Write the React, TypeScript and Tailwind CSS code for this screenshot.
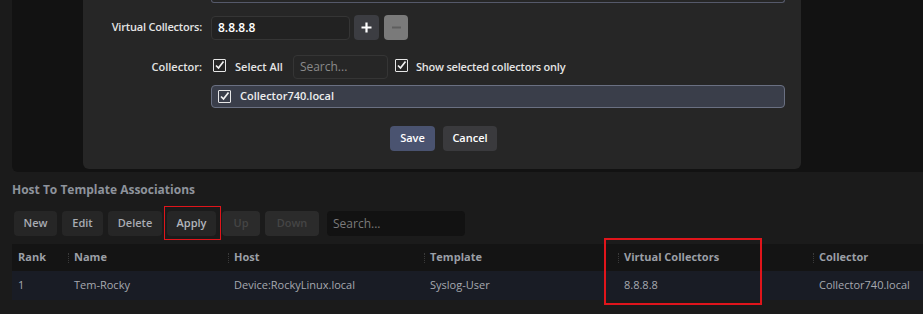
import React from "react";

const Check = () => (
  <span className="inline-flex w-[13px] h-[13px] border border-[#e6e6e6] rounded-[1px] items-center justify-center shrink-0">
    <svg width="11" height="11" viewBox="0 0 11 11">
      <path d="M2 5.5 L4.5 8 L9.5 1.5" stroke="#f2f2f2" strokeWidth="1.7" fill="none" />
    </svg>
  </span>
);

const cols = [
  { t: "Rank", w: "w-[56px]", sep: false },
  { t: "Name", w: "w-[160px]", sep: true },
  { t: "Host", w: "w-[196px]", sep: true },
  { t: "Template", w: "w-[194px]", sep: true },
  { t: "Virtual Collectors", w: "w-[195px]", sep: true },
  { t: "Collector", w: "flex-1", sep: true },
];
const row = ["1", "Tem-Rocky", "Device:RockyLinux.local", "Syslog-User", "8.8.8.8", "Collector740.local"];

export default function App() {
  return (
    <div
      className="relative w-[923px] h-[314px] bg-[#1b1b1b] overflow-hidden text-[11px]"
      style={{ fontFamily: '"Open Sans", "DejaVu Sans", sans-serif' }}
    >
      {/* top dialog area */}
      <div className="pl-[12px]">
        <div className="h-[172px] bg-[#121212] rounded-bl-[6px] pl-[71px]">
          <div className="w-[718px] h-[169px] bg-[#262626] rounded-b-[6px] flex flex-col">
            <div className="ml-[128px] w-[574px] h-[3px] border-b border-x border-[#55596a] rounded-b-[3px]" />
            {/* virtual collectors */}
            <div className="flex items-center mt-[12px] h-[25px]">
              <div className="w-[119px] text-right font-semibold text-[#e4e4e4] tracking-[-0.2px]">Virtual Collectors:</div>
              <div className="ml-[9px] w-[139px] h-[24px] bg-[#222222] border border-[#353535] rounded-[4px] flex items-center pl-[6px] text-[12px] text-white font-semibold">
                8.8.8.8
              </div>
              <div className="ml-[4px] w-[25px] h-[25px] rounded-[4px] bg-[#3c3d42] flex items-center justify-center">
                <svg width="11" height="11" viewBox="0 0 11 11">
                  <path d="M5.5 0.5 V10.5 M0.5 5.5 H10.5" stroke="#ffffff" strokeWidth="2.2" />
                </svg>
              </div>
              <div className="ml-[5px] w-[24px] h-[25px] rounded-[4px] bg-[#7a7a7a] flex items-center justify-center">
                <svg width="11" height="11" viewBox="0 0 11 11">
                  <path d="M1 5.5 H10" stroke="#5e5e5e" strokeWidth="2" />
                </svg>
              </div>
            </div>
            {/* collector row */}
            <div className="flex items-center mt-[15px] h-[24px]">
              <div className="w-[119px] text-right font-semibold text-[#e4e4e4]">Collector:</div>
              <div className="ml-[11px]"><Check /></div>
              <span className="ml-[9px] font-semibold text-[#e4e4e4]">Select All</span>
              <div className="ml-[10px] w-[95px] h-[24px] border border-[#353535] rounded-[4px] flex items-center pl-[6px] text-[12px] text-[#8a8a8a]">
                Search...
              </div>
              <div className="ml-[7px]"><Check /></div>
              <span className="ml-[8px] font-semibold text-[#e4e4e4] tracking-[-0.2px]">Show selected collectors only</span>
            </div>
            {/* list */}
            <div className="ml-[128px] mt-[6px] w-[574px] h-[23px] bg-[#3a3e4a] border border-[#6a7082] rounded-[4px] flex items-center pl-[6px]">
              <Check />
              <span className="ml-[9px] font-semibold text-[#eeeeee]">Collector740.local</span>
            </div>
            {/* buttons */}
            <div className="mt-[18px] flex justify-center gap-[8px] pl-[3px]">
              <div className="w-[45px] h-[25px] rounded-[4px] bg-[#4a5370] flex items-center justify-center font-semibold text-white">Save</div>
              <div className="w-[54px] h-[25px] rounded-[4px] bg-[#3a3a3d] flex items-center justify-center font-semibold text-white">Cancel</div>
            </div>
          </div>
        </div>
      </div>

      {/* associations */}
      <div className="pl-[12px] mt-[11px] text-[12px] font-bold text-[#8e939c] h-[14px] leading-[14px]">
        Host To Template Associations
      </div>
      <div className="flex items-center mt-[14px] pl-[14px] h-[25px]">
        <div className="w-[43px] h-[25px] rounded-[4px] bg-[#262626] flex items-center justify-center font-semibold text-[#a9acb3]">New</div>
        <div className="ml-[5px] w-[41px] h-[25px] rounded-[4px] bg-[#262626] flex items-center justify-center font-semibold text-[#a9acb3]">Edit</div>
        <div className="ml-[5px] w-[54px] h-[25px] rounded-[4px] bg-[#262626] flex items-center justify-center font-semibold text-[#a9acb3]">Delete</div>
        <div className="ml-[5px] w-[49px] h-[25px] rounded-[4px] bg-[#262626] flex items-center justify-center font-semibold text-[#b3b6bd]">Apply</div>
        <div className="ml-[6px] w-[38px] h-[25px] rounded-[4px] bg-[#2b2b2b] flex items-center justify-center font-semibold text-[#454545]">Up</div>
        <div className="ml-[5px] w-[54px] h-[25px] rounded-[4px] bg-[#2b2b2b] flex items-center justify-center font-semibold text-[#454545]">Down</div>
        <div className="ml-[8px] w-[138px] h-[25px] rounded-[4px] bg-[#121212] flex items-center pl-[6px] text-[12px] text-[#7a7a7a]">Search...</div>
      </div>

      {/* table */}
      <div className="ml-[12px] mt-[8px]">
        <div className="flex h-[27px] bg-[#141414] items-center">
          {cols.map((c, i) => (
            <div key={i} className={`${c.w} relative flex items-center h-full pl-[6px] font-bold text-[#9b9fa6]`}>
              {c.sep && (
                <span className="absolute left-0 top-[9px] h-[10px] border-l border-dotted border-[#3a3a3a]" />
              )}
              {c.t}
            </div>
          ))}
        </div>
        <div className="flex h-[29px] bg-[#191c25] items-center">
          {cols.map((c, i) => (
            <div key={i} className={`${c.w} pl-[6px] text-[#a6a9b0]`}>
              {row[i]}
            </div>
          ))}
        </div>
      </div>

      {/* annotation boxes */}
      <div className="absolute left-[164px] top-[206px] w-[57px] h-[34px] border border-[#e0151b]" />
      <div className="absolute left-[604px] top-[238px] w-[158px] h-[67px] border-2 border-[#e0151b]" />
    </div>
  );
}
